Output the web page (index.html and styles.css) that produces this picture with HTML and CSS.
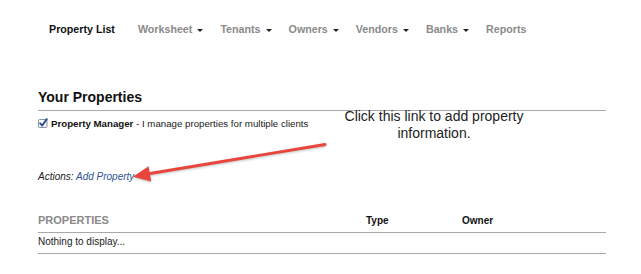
FILE: index.html
```html
<!DOCTYPE html>
<html lang="en">
<head>
    <meta charset="UTF-8">
    <meta name="viewport" content="width=device-width, initial-scale=1.0">
    <title>Your Properties</title>
    <link rel="stylesheet" href="styles.css">
</head>
<body>
    <nav class="top-nav">
        <a class="nav-item active" href="#">Property List</a>
        <a class="nav-item dropdown" href="#">Worksheet</a>
        <a class="nav-item dropdown" href="#">Tenants</a>
        <a class="nav-item dropdown" href="#">Owners</a>
        <a class="nav-item dropdown" href="#">Vendors</a>
        <a class="nav-item dropdown" href="#">Banks</a>
        <a class="nav-item" href="#">Reports</a>
    </nav>

    <main class="content">
        <h2 class="section-title">Your Properties</h2>

        <label class="role-option"><span class="check-box"><svg width="10" height="10" viewBox="0 0 10 10">
                    <rect x="0.5" y="1.5" width="8.5" height="8" rx="1" fill="#f4f6f9" stroke="#8795a8"/>
                    <path d="M2.2 5.2 L4.1 7.6 L8.8 1.1" fill="none" stroke="#2c4f86" stroke-width="1.8" stroke-linecap="round" stroke-linejoin="round"/>
                </svg></span><strong>Property Manager</strong> - I manage properties for multiple clients</label>

        <p class="actions">Actions: <a href="#">Add Property</a></p>

        <table class="property-table">
            <thead>
                <tr>
                    <th class="col-name">PROPERTIES</th>
                    <th class="col-type">Type</th>
                    <th class="col-owner">Owner</th>
                </tr>
            </thead>
            <tbody>
                <tr>
                    <td colspan="3">Nothing to display...</td>
                </tr>
            </tbody>
        </table>
    </main>

    <!-- annotation overlay -->
    <div class="callout">Click this link to add property information.</div>
    <svg class="callout-arrow" width="215" height="55" viewBox="120 135 215 55">
        <line x1="325" y1="144.5" x2="147" y2="174" stroke="#e8453c" stroke-width="2.8" stroke-linecap="round"/>
        <polygon points="133,176.7 148.6,166.3 151.2,181.6" fill="#e8453c"/>
    </svg>
</body>
</html>
```

FILE: styles.css
```css
body {
    font-family: 'Liberation Sans', Arial, sans-serif;
    margin: 0;
    padding: 0;
    background-color: #fff;
    color: #1a1a1a;
}

a {
    text-decoration: none;
}

.top-nav {
    display: flex;
    gap: 17px;
    padding: 23px 0 0 49px;
    height: 13px;
    font-size: 10.7px;
    line-height: 13px;
    font-weight: bold;
}

.nav-item {
    color: #8a8a8a;
}

.nav-item.active {
    color: #111;
    margin-right: 6px;
}

.nav-item.dropdown::after {
    content: "";
    display: inline-block;
    margin-left: 5px;
    vertical-align: middle;
    border-left: 3px solid transparent;
    border-right: 3px solid transparent;
    border-top: 3px solid #222;
}

.content {
    width: 568px;
    margin: 53px 0 0 38px;
}

.section-title {
    margin: 0;
    padding-bottom: 4px;
    border-bottom: 1px solid #a9a9a9;
    font-size: 14px;
    line-height: 17px;
    color: #111;
}

.role-option {
    display: block;
    margin-top: 6px;
    font-size: 9.7px;
    line-height: 13px;
}

.role-option strong {
    color: #111;
}

.check-box {
    display: inline-block;
    width: 10px;
    height: 10px;
    margin-right: 3px;
    vertical-align: -1px;
}

.check-box svg {
    display: block;
}

.actions {
    margin: 40px 0 0;
    font-size: 10px;
    line-height: 13px;
    font-style: italic;
    color: #222;
}

.actions a {
    color: #2d5596;
}

.property-table {
    width: 100%;
    margin-top: 30px;
    border-collapse: collapse;
    font-size: 10px;
}

.property-table th {
    padding: 0 0 4px;
    border-bottom: 1px solid #a9a9a9;
    text-align: left;
    vertical-align: baseline;
    line-height: 14px;
    color: #111;
}

.property-table .col-name {
    width: 328px;
    font-size: 11px;
    color: #8a8a8a;
}

.property-table .col-type {
    width: 96px;
}

.property-table td {
    padding: 2px 0 5px;
    border-bottom: 1px solid #a9a9a9;
    line-height: 13px;
    color: #1a1a1a;
}

.callout {
    position: absolute;
    left: 334px;
    top: 108px;
    width: 200px;
    text-align: center;
    font-size: 14px;
    line-height: 16.5px;
    color: #222;
}

.callout-arrow {
    position: absolute;
    left: 120px;
    top: 135px;
    filter: drop-shadow(0 1px 1px rgba(0, 0, 0, 0.25));
}
```
